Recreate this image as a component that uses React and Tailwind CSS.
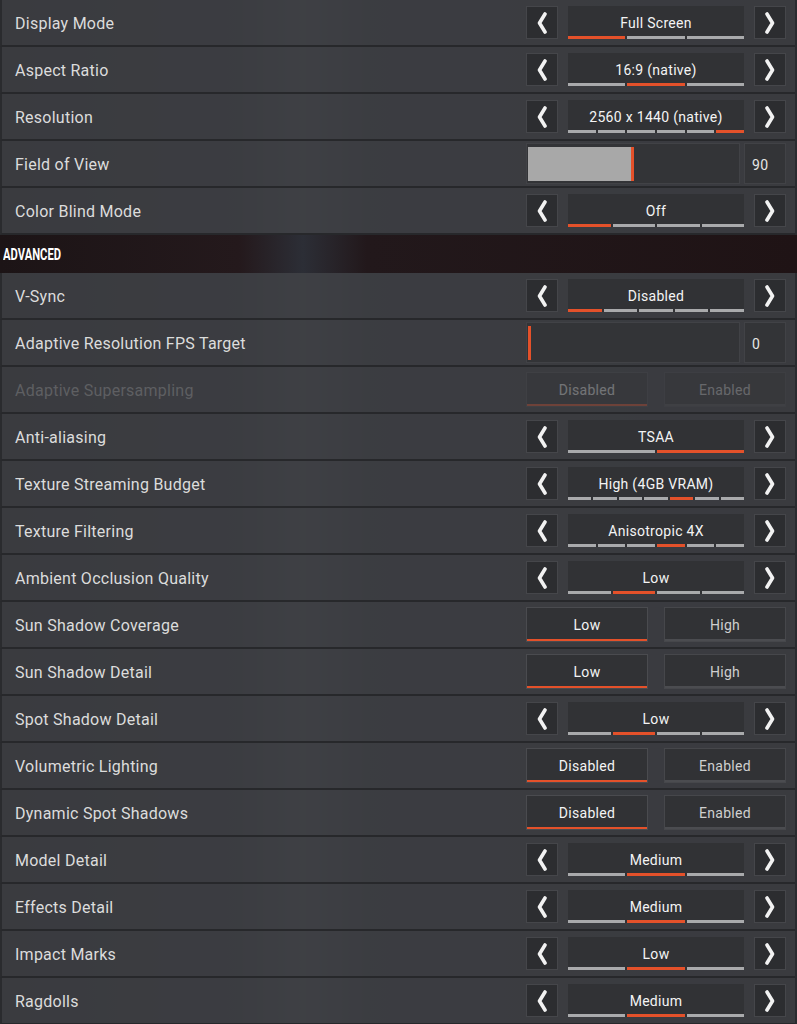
import React from 'react';

const basic = [
  { label: 'Display Mode', type: 'select', value: 'Full Screen', count: 3, sel: 0 },
  { label: 'Aspect Ratio', type: 'select', value: '16:9 (native)', count: 3, sel: 1 },
  { label: 'Resolution', type: 'select', value: '2560 x 1440 (native)', count: 6, sel: 5 },
  { label: 'Field of View', type: 'slider', value: '90', pct: 49 },
  { label: 'Color Blind Mode', type: 'select', value: 'Off', count: 4, sel: 0 },
];

const advanced = [
  { label: 'V-Sync', type: 'select', value: 'Disabled', count: 5, sel: 0 },
  { label: 'Adaptive Resolution FPS Target', type: 'slider', value: '0', pct: 0 },
  { label: 'Adaptive Supersampling', type: 'toggle', options: ['Disabled', 'Enabled'], sel: 0, disabled: true },
  { label: 'Anti-aliasing', type: 'select', value: 'TSAA', count: 2, sel: 1 },
  { label: 'Texture Streaming Budget', type: 'select', value: 'High (4GB VRAM)', count: 7, sel: 4 },
  { label: 'Texture Filtering', type: 'select', value: 'Anisotropic 4X', count: 6, sel: 3 },
  { label: 'Ambient Occlusion Quality', type: 'select', value: 'Low', count: 4, sel: 1 },
  { label: 'Sun Shadow Coverage', type: 'toggle', options: ['Low', 'High'], sel: 0 },
  { label: 'Sun Shadow Detail', type: 'toggle', options: ['Low', 'High'], sel: 0 },
  { label: 'Spot Shadow Detail', type: 'select', value: 'Low', count: 4, sel: 1 },
  { label: 'Volumetric Lighting', type: 'toggle', options: ['Disabled', 'Enabled'], sel: 0 },
  { label: 'Dynamic Spot Shadows', type: 'toggle', options: ['Disabled', 'Enabled'], sel: 0 },
  { label: 'Model Detail', type: 'select', value: 'Medium', count: 3, sel: 1 },
  { label: 'Effects Detail', type: 'select', value: 'Medium', count: 3, sel: 1 },
  { label: 'Impact Marks', type: 'select', value: 'Low', count: 3, sel: 1 },
  { label: 'Ragdolls', type: 'select', value: 'Medium', count: 3, sel: 1 },
];

const Chevron = ({ dir }) => (
  <svg width="12" height="22" viewBox="0 0 12 22">
    <path
      d={dir === 'left' ? 'M9 2 L3.5 11 L9 20' : 'M3 2 L8.5 11 L3 20'}
      fill="none"
      stroke="#f2f2f2"
      strokeWidth="3.6"
      strokeLinecap="round"
      strokeLinejoin="round"
    />
  </svg>
);

const ArrowBox = ({ dir }) => (
  <div className="w-[32px] h-[33px] flex items-center justify-center bg-[#2c2d30] border border-[#45464a]">
    <Chevron dir={dir} />
  </div>
);

const Select = ({ value, count, sel }) => (
  <div className="flex items-start justify-between w-[260px]">
    <ArrowBox dir="left" />
    <div className="w-[176px] h-[33px] flex flex-col bg-[#313235]">
      <div className="flex-1 flex items-center justify-center text-[14px] tracking-[0.3px] text-[#f4f4f4] pt-[5px]">{value}</div>
      <div className="flex gap-[2px] h-[3px]">
        {Array.from({ length: count }).map((_, i) => (
          <div key={i} className={`flex-1 ${i === sel ? 'bg-[#e4512a]' : 'bg-[#a9aaac]'}`} />
        ))}
      </div>
    </div>
    <ArrowBox dir="right" />
  </div>
);

const Slider = ({ value, pct }) => (
  <div className="flex items-stretch w-[260px] h-[41px] gap-[4px]">
    <div className="w-[214px] flex items-center bg-[#333437] border border-[#414246] pl-[1px] pr-[1px]">
      <div className="h-[34px] bg-[#a8a8a8]" style={{ width: `${pct}%` }} />
      <div className="h-[34px] w-[3px] bg-[#e4512a]" />
    </div>
    <div className="flex-1 flex items-center pl-[7px] pt-[3px] bg-[#333437] border border-[#414246] text-[14px] tracking-[0.5px] text-[#e6e6e6]">
      {value}
    </div>
  </div>
);

const Toggle = ({ options, sel, disabled }) => (
  <div className={`flex justify-between w-[260px] ${disabled ? 'opacity-30' : ''}`}>
    {options.map((o, i) => (
      <div
        key={o}
        className={`w-[122px] h-[35px] flex flex-col bg-[#313235] border ${i === sel ? 'border-[#4a4b4f]' : 'border-[#46474b]'}`}
      >
        <div className={`flex-1 flex items-center justify-center pt-[3px] text-[14px] tracking-[0.3px] ${i === sel ? 'text-[#f4f4f4]' : 'text-[#cfcfcf]'}`}>{o}</div>
        <div className={`h-[2px] ${i === sel ? 'bg-[#e4512a]' : 'bg-[#4b4c50]'}`} />
      </div>
    ))}
  </div>
);

const Row = ({ item }) => (
  <div className="h-[47px] flex items-center justify-between pl-[13px] pr-[9px] bg-[#3c3d41]/90 border-b-2 border-[#27282b] border-l-2 border-l-[#2a2b2e]">
    <span className={`pt-[3px] text-[16px] tracking-[0.25px] ${item.disabled ? 'text-[#5e5f62]' : 'text-[#dcdcdc]'}`}>{item.label}</span>
    {item.type === 'select' && <Select value={item.value} count={item.count} sel={item.sel} />}
    {item.type === 'slider' && <Slider value={item.value} pct={item.pct} />}
    {item.type === 'toggle' && <Toggle options={item.options} sel={item.sel} disabled={item.disabled} />}
  </div>
);

export default function App() {
  return (
    <div
      className="w-[797px] h-[1024px] overflow-hidden bg-[linear-gradient(90deg,#2a2b2f_0%,#3a3c42_30%,#565a62_38%,#3a3c42_46%,#2a2b2f_100%)]"
      style={{ fontFamily: 'Roboto, "Noto Sans", sans-serif' }}
    >
      <div className="mr-[2px]">
        {basic.map((item) => (
          <Row key={item.label} item={item} />
        ))}
      </div>
      <div className="h-[38px] flex items-center pl-[3px] bg-[linear-gradient(90deg,#1c1416_0%,#24191c_30%,#2c2e36_38%,#22181b_46%,#1f1315_100%)]">
        <span className="inline-block pt-[2px] text-[17px] font-bold text-white origin-left scale-x-[0.66]">ADVANCED</span>
      </div>
      <div className="mr-[2px]">
        {advanced.map((item) => (
          <Row key={item.label} item={item} />
        ))}
      </div>
    </div>
  );
}
